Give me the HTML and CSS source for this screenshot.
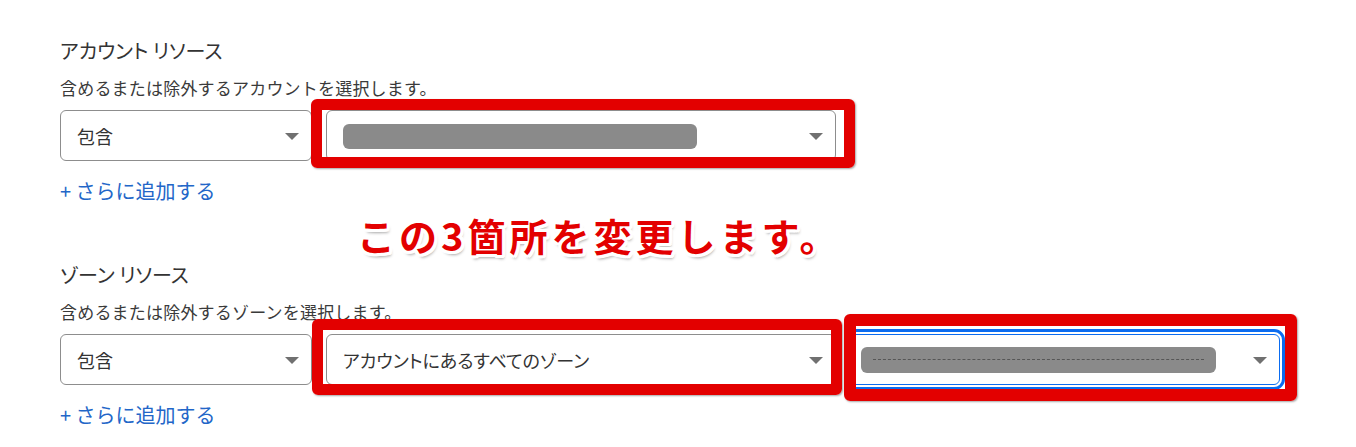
FILE: index.html
```html
<!DOCTYPE html>
<html lang="ja">
<head>
<meta charset="utf-8">
<title>リソース</title>
<link rel="stylesheet" href="styles.css">
</head>
<body>
<div class="page">
  <section class="res">
    <h2 class="res-title">アカウント リソース</h2>
    <p class="res-desc">含めるまたは除外するアカウントを選択します。</p>
    <div class="row">
      <div class="select sel-mode"><span class="sel-text">包含</span><i class="caret"></i></div>
      <div class="select sel-mid"><span class="blur blur-a"></span><i class="caret"></i></div>
    </div>
    <a class="add" href="#">+ さらに追加する</a>
  </section>

  <section class="res res-2">
    <h2 class="res-title">ゾーン リソース</h2>
    <p class="res-desc">含めるまたは除外するゾーンを選択します。</p>
    <div class="row">
      <div class="select sel-mode"><span class="sel-text">包含</span><i class="caret"></i></div>
      <div class="select sel-mid"><span class="sel-text narrow">アカウントにあるすべてのゾーン</span><i class="caret"></i></div>
      <div class="select sel-zone focused"><span class="blur blur-b"><span class="blur-line"></span></span><i class="caret"></i></div>
    </div>
    <a class="add" href="#">+ さらに追加する</a>
  </section>

  <div class="mark mark-1"></div>
  <div class="mark mark-2"></div>
  <div class="mark mark-3"></div>
  <div class="note">この3箇所を変更します。</div>
</div>
</body>
</html>
```

FILE: styles.css
```css
html, body {
  margin: 0;
  padding: 0;
  background: #ffffff;
}

.page {
  position: relative;
  width: 1356px;
  height: 447px;
  overflow: hidden;
  padding: 38px 0 0 60px;
  box-sizing: border-box;
  font-family: "Noto Sans CJK JP", "Noto Sans", sans-serif;
  color: #333333;
}

.res {
  display: flex;
  flex-direction: column;
  align-items: flex-start;
}

.res-2 {
  margin-top: 57px;
}

.res-title {
  margin: 0;
  font-size: 20px;
  line-height: 26px;
  font-weight: 400;
  font-feature-settings: "palt";
}

.res-desc {
  margin: 12px 0 0;
  font-size: 17px;
  line-height: 24px;
  letter-spacing: 0.2px;
  color: #3a3a3a;
}

.row {
  display: flex;
  gap: 14px;
  margin-top: 10px;
}

.select {
  position: relative;
  display: flex;
  align-items: center;
  justify-content: space-between;
  height: 51px;
  box-sizing: border-box;
  border: 1px solid #8d8d8d;
  border-radius: 6px;
  background: #fff;
  padding: 0 12px 0 16px;
}

.sel-mode { width: 252px; }
.sel-mid { width: 510px; }
.sel-zone { width: 430px; padding-left: 10px; }

.focused {
  border-color: #0b6cf0;
  outline: 3px solid #0b6cf0;
  outline-offset: 2px;
}

.sel-text {
  font-size: 18px;
  line-height: 24px;
  color: #333;
}

.narrow {
  font-feature-settings: "palt";
}

.caret {
  width: 0;
  height: 0;
  border-left: 7px solid transparent;
  border-right: 7px solid transparent;
  border-top: 7px solid #707070;
  margin-top: 2px;
}

.blur {
  display: block;
  background: #8a8a8a;
  border-radius: 6px;
}

.blur-a {
  width: 354px;
  height: 25px;
  margin-top: 2px;
}

.blur-b {
  position: relative;
  width: 355px;
  height: 26px;
}

.blur-line {
  position: absolute;
  left: 12px;
  right: 12px;
  top: 12px;
  border-top: 1px dashed #4a4a4a;
  opacity: 0.8;
}

.add {
  margin-top: 16px;
  font-size: 20px;
  line-height: 28px;
  color: #2266c8;
  text-decoration: none;
}

.mark {
  position: absolute;
  box-sizing: border-box;
  border: 11px solid #e30000;
  border-radius: 6px;
  box-shadow: 1px 1px 2px rgba(0, 0, 0, 0.35);
}

.mark-1 { left: 311px; top: 99px; width: 544px; height: 69px; }
.mark-2 { left: 312px; top: 319px; width: 530px; height: 76px; }
.mark-3 { left: 844px; top: 314px; width: 453px; height: 87px; border-width: 12px; }

.note {
  position: absolute;
  left: 357px;
  top: 209px;
  font-size: 38px;
  line-height: 52px;
  font-weight: 700;
  letter-spacing: 4px;
  color: #e30000;
  white-space: nowrap;
  text-shadow:
    3px 0 0 #fff, -3px 0 0 #fff, 0 3px 0 #fff, 0 -3px 0 #fff,
    2px 2px 0 #fff, -2px 2px 0 #fff, 2px -2px 0 #fff, -2px -2px 0 #fff,
    3px 2px 0 #fff, -3px 2px 0 #fff, 3px -2px 0 #fff, -3px -2px 0 #fff,
    2px 3px 0 #fff, -2px 3px 0 #fff, 2px -3px 0 #fff, -2px -3px 0 #fff,
    2px 4px 3px rgba(0, 0, 0, 0.35);
}
```
